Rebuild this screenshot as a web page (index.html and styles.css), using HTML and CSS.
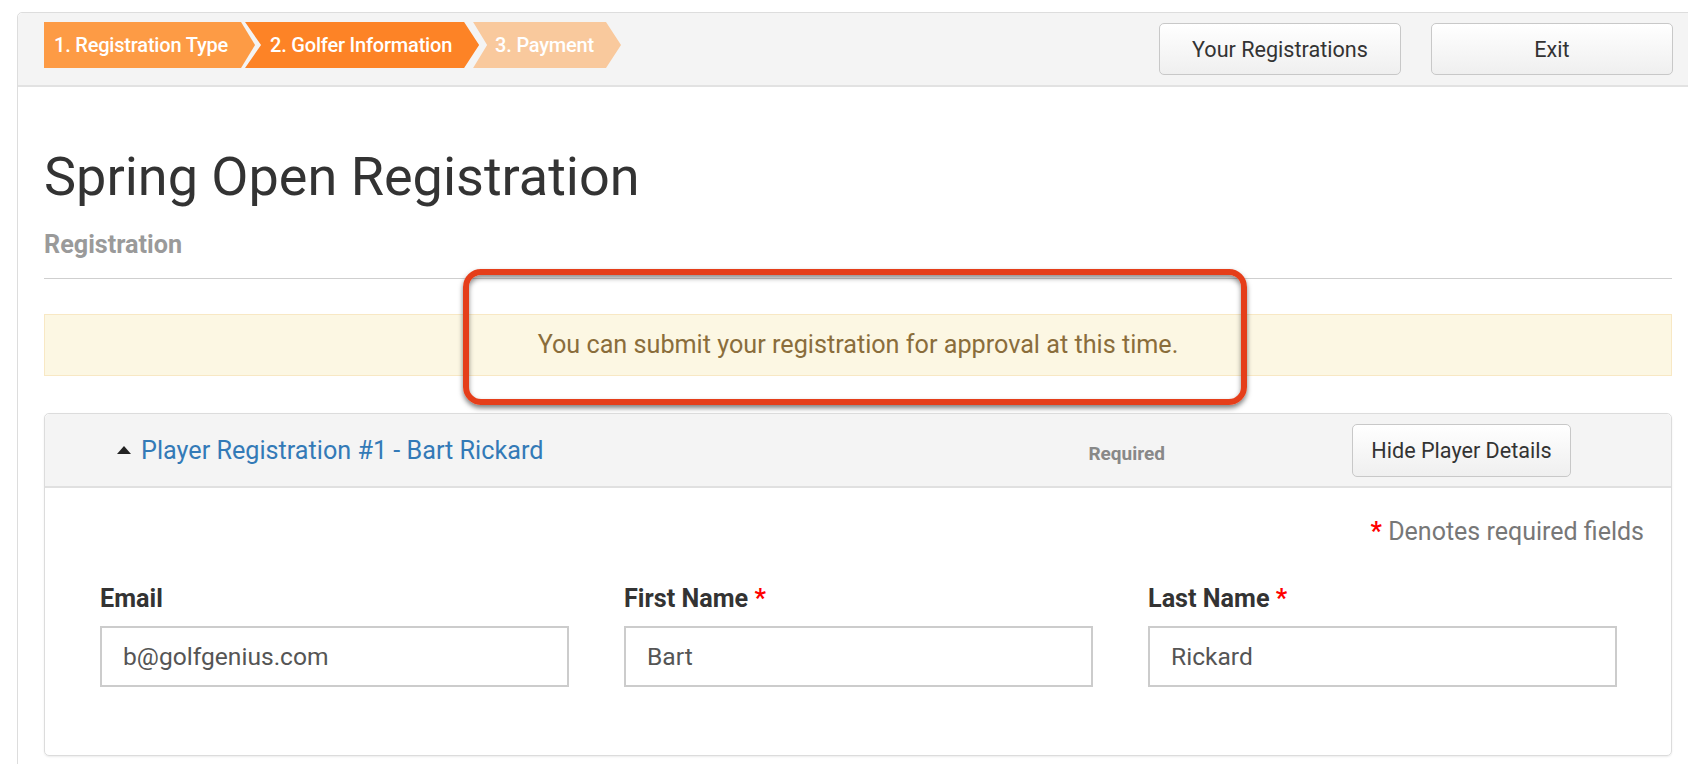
FILE: index.html
```html
<!DOCTYPE html>
<html>
<head>
<meta charset="utf-8">
<link rel="stylesheet" href="styles.css">
</head>
<body>
<div class="app">
  <div class="topbar">
    <div class="steps">
      <div class="step step-1">1. Registration Type</div>
      <div class="step step-2">2. Golfer Information</div>
      <div class="step step-3">3. Payment</div>
    </div>
    <div class="actions">
      <button class="btn btn-wide">Your Registrations</button>
      <button class="btn btn-wide">Exit</button>
    </div>
  </div>
  <div class="content">
    <h1 class="title">Spring Open Registration</h1>
    <div class="subtitle">Registration</div>
    <hr class="rule">
    <div class="alert">You can submit your registration for approval at this time.</div>
    <div class="panel">
      <div class="panel-head">
        <div class="panel-title"><span class="caret"></span>Player Registration #1 - Bart Rickard</div>
        <div class="req">Required</div>
        <button class="btn btn-hide">Hide Player Details</button>
      </div>
      <div class="panel-body">
        <div class="denotes"><span class="star">*</span> Denotes required fields</div>
        <div class="fields">
          <div class="field">
            <label class="label">Email</label>
            <div class="input">b@golfgenius.com</div>
          </div>
          <div class="field">
            <label class="label">First Name <span class="star">*</span></label>
            <div class="input">Bart</div>
          </div>
          <div class="field">
            <label class="label">Last Name <span class="star">*</span></label>
            <div class="input">Rickard</div>
          </div>
        </div>
      </div>
    </div>
  </div>
</div>
<div class="highlight"></div>
</body>
</html>
```

FILE: styles.css
```css
html, body {
  margin: 0;
  padding: 0;
  background: #fff;
  overflow: hidden;
}
body {
  font-family: Roboto, "Liberation Sans", sans-serif;
  color: #333;
  width: 1688px;
  height: 764px;
  position: relative;
}
.app {
  margin: 12px 0 0 17px;
  width: 1680px;
  height: 800px;
  border: 1px solid #ddd;
  border-radius: 5px 5px 0 0;
}
.topbar {
  background: #f4f4f4;
  border-bottom: 2px solid #e2e2e2;
  border-radius: 5px 5px 0 0;
  height: 63px;
  padding: 9px 25px 0 26px;
  display: flex;
  justify-content: space-between;
  align-items: flex-start;
}
.steps {
  display: flex;
}
.step {
  height: 46px;
  line-height: 46px;
  color: #fff;
  font-size: 20px;
  font-weight: 500;
  white-space: nowrap;
  letter-spacing: -0.2px;
}
.step-1 {
  background: #fd9b45;
  padding: 0 27px 0 10px;
  clip-path: polygon(0 0, calc(100% - 14px) 0, 100% 50%, calc(100% - 14px) 100%, 0 100%);
}
.step-2 {
  background: #fd8326;
  margin-left: -10px;
  padding: 0 27px 0 25px;
  clip-path: polygon(0 0, calc(100% - 15px) 0, 100% 50%, calc(100% - 15px) 100%, 0 100%, 16px 50%);
}
.step-3 {
  background: #f9c99d;
  margin-left: -6px;
  padding: 0 27px 0 22px;
  clip-path: polygon(0 0, calc(100% - 15px) 0, 100% 50%, calc(100% - 15px) 100%, 0 100%, 14px 50%);
}
.actions {
  display: flex;
  gap: 30px;
  padding-top: 1px;
}
.btn {
  font-family: Roboto, "Liberation Sans", sans-serif;
  font-size: 21.6px;
  color: #333;
  background: linear-gradient(#ffffff, #efefef);
  border: 1px solid #c8c8c8;
  border-radius: 5px;
  height: 52px;
  padding: 0;
}
.btn-wide {
  width: 242px;
}
.content {
  padding: 0 26px;
}
.title {
  margin: 58px 0 0;
  font-size: 54px;
  line-height: 64px;
  font-weight: 400;
  color: #333;
}
.subtitle {
  margin-top: 22px;
  font-size: 25.2px;
  line-height: 27px;
  font-weight: 700;
  color: #9a9a9a;
}
.rule {
  margin: 20px 0 0;
  border: 0;
  border-top: 1px solid #cfcfcf;
  height: 0;
}
.alert {
  margin-top: 35px;
  height: 60px;
  line-height: 60px;
  background: #fcf7e3;
  border: 1px solid #f8e8c4;
  text-align: center;
  color: #8a6d3b;
  font-size: 25.2px;
}
.panel {
  margin-top: 37px;
  border: 1px solid #dcdcdc;
  border-radius: 5px;
  height: 343px;
  box-sizing: border-box;
  box-shadow: 0 1px 2px rgba(0, 0, 0, 0.08);
}
.panel-head {
  height: 72px;
  background: #f4f4f4;
  border-bottom: 2px solid #e0e0e0;
  border-radius: 5px 5px 0 0;
  display: flex;
  align-items: center;
  padding-left: 72px;
}
.panel-title {
  flex: 1;
  font-size: 25.2px;
  color: #337ab7;
  display: flex;
  align-items: center;
}
.caret {
  width: 0;
  height: 0;
  border-left: 7.5px solid transparent;
  border-right: 7.5px solid transparent;
  border-bottom: 8px solid #222;
  margin-right: 10px;
}
.req {
  font-size: 19px;
  font-weight: 700;
  color: #888;
  margin-right: 187px;
  padding-top: 6px;
}
.btn-hide {
  width: 219px;
  height: 53px;
  margin-right: 100px;
}
.panel-body {
  padding: 30px 27px 0 55px;
}
.denotes {
  text-align: right;
  font-size: 25px;
  line-height: 28px;
  color: #777;
}
.star {
  color: #f00;
  font-weight: 700;
}
.fields {
  margin-top: 39px;
  display: grid;
  grid-template-columns: 469px 469px 469px;
  column-gap: 55px;
}
.label {
  display: block;
  font-size: 25.2px;
  line-height: 28px;
  font-weight: 700;
  color: #333;
}
.input {
  margin-top: 13px;
  height: 57px;
  line-height: 57px;
  border: 2px solid #cccccc;
  padding-left: 21px;
  font-size: 24.6px;
  color: #555;
}
.highlight {
  position: absolute;
  left: 463px;
  top: 269px;
  width: 772px;
  height: 124px;
  border: 6px solid #e53e1a;
  border-radius: 18px;
  box-shadow: 0 3px 5px rgba(0, 0, 0, 0.5), inset 0 3px 5px rgba(0, 0, 0, 0.45);
}
```
